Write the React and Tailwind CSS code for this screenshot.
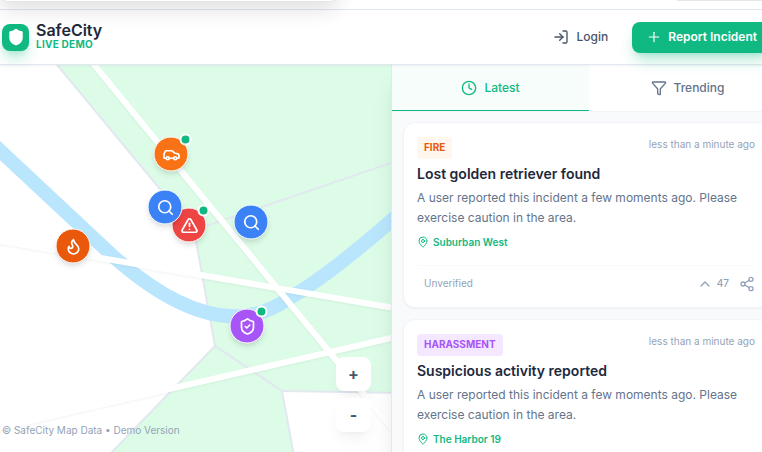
import {
  Car,
  ChevronUp,
  Clock,
  Flame,
  Funnel,
  LogIn,
  MapPin,
  Plus,
  Search,
  Share2,
  Shield,
  ShieldCheck,
  TriangleAlert,
} from 'lucide-react';

const pins = [
  { id: 1, label: 'Fire', icon: Flame, color: 'bg-[#ea580c]', place: 'left-[73px] top-[181px]', live: false },
  { id: 2, label: 'Car theft', icon: Car, color: 'bg-[#f97316]', place: 'left-[171px] top-[89px]', live: true },
  { id: 3, label: 'Accident', icon: TriangleAlert, color: 'bg-[#ef4444]', place: 'left-[189px] top-[160px]', live: true },
  { id: 4, label: 'Lost item', icon: Search, color: 'bg-[#3b82f6]', place: 'left-[165px] top-[142px]', live: false },
  { id: 5, label: 'Lost pet', icon: Search, color: 'bg-[#3b82f6]', place: 'left-[251px] top-[157px]', live: false },
  { id: 6, label: 'Harassment', icon: ShieldCheck, color: 'bg-[#a855f7]', place: 'left-[247px] top-[261px]', live: true },
];

const incidents = [
  {
    id: 1,
    type: 'FIRE',
    badge: 'bg-[#fff7ed] text-[#ea580c]',
    title: 'Lost golden retriever found',
    place: 'Suburban West',
    votes: 47,
  },
  {
    id: 2,
    type: 'HARASSMENT',
    badge: 'bg-[#f3e8ff] text-[#a855f7]',
    title: 'Suspicious activity reported',
    place: 'The Harbor 19',
  },
];

function Header() {
  return (
    <header className="relative z-20 flex h-14 shrink-0 items-center justify-between border-y border-slate-200 bg-white pr-[15px] pl-0.5 shadow-xs">
      <div className="flex items-center gap-[7px]">
        <div className="flex size-[27px] items-center justify-center rounded-lg bg-[#10b981] text-white shadow-lg shadow-[#10b981]/30">
          <Shield size={18} fill="currentColor" />
        </div>
        <div className="pb-[3px]">
          <h1 className="text-base leading-4 font-semibold text-[#1e293b]">SafeCity</h1>
          <p className="text-[10px] leading-3 font-bold tracking-wide text-[#10b981]">LIVE DEMO</p>
        </div>
      </div>
      <div className="flex items-center gap-6">
        <button className="flex items-center gap-2 text-xs font-medium text-[#475569]">
          <LogIn size={16} />
          Login
        </button>
        <button className="flex h-[31px] items-center gap-1.5 rounded-lg bg-[#10b981] px-3.5 text-xs font-semibold text-white shadow-lg shadow-[#10b981]/30">
          <Plus size={16} strokeWidth={1.75} />
          Report Incident
        </button>
      </div>
    </header>
  );
}

function MapBackground() {
  return (
    <svg
      className="absolute inset-0 size-full"
      viewBox="0 0 391 387"
      preserveAspectRatio="xMinYMin slice"
      fill="none"
      aria-hidden="true"
    >
      <rect width="391" height="387" fill="#fff" />
      <g fill="#dcfce7" stroke="#e2e8f0" strokeWidth="2">
        <path d="M53 -5L194 165L215 281L282 326L400 328V-5Z" />
        <path d="M194 165L400 95" />
        <path d="M215 281L108 391H294L282 326Z" />
      </g>
      <path d="M-6 80L115 193Q218 283 288 234Q330 210 400 148" stroke="#bae6fd" strokeWidth="14" />
      <g className="drop-shadow-xs" stroke="#fff" strokeWidth="6">
        <path d="M87 -9L400 373" />
        <path d="M-5 175L400 244" />
        <path d="M-5 364L400 271" />
      </g>
    </svg>
  );
}

function Pin({ label, icon: Icon, color, place, live }) {
  return (
    <button
      aria-label={label}
      className={`absolute flex size-[35px] -translate-x-1/2 -translate-y-1/2 items-center justify-center rounded-full border border-white text-white shadow-md ${color} ${place}`}
    >
      <Icon size={18} strokeWidth={2.3} />
      {live && (
        <span className="absolute -top-1 -right-1 size-3 rounded-full border-2 border-white bg-[#10b981]" />
      )}
    </button>
  );
}

function IncidentMap() {
  return (
    <section className="relative min-w-0 flex-1 overflow-hidden">
      <MapBackground />
      {pins.map((pin) => (
        <Pin key={pin.id} {...pin} />
      ))}
      <div className="absolute right-5 bottom-5 flex flex-col gap-[7px]">
        <button className="h-[34px] w-[35px] rounded-lg bg-white text-base font-bold text-[#475569] shadow-lg shadow-black/5">+</button>
        <button className="h-[34px] w-[35px] rounded-lg bg-white text-base font-bold text-[#475569] shadow-lg shadow-black/5">-</button>
      </div>
      <p className="absolute bottom-3.5 left-0.5 text-[10px] leading-4 text-[#94a3b8]">
        © SafeCity Map Data • Demo Version
      </p>
    </section>
  );
}

function IncidentCard({ type, badge, title, place, votes }) {
  return (
    <article className="rounded-xl border border-slate-100 bg-white px-[13px] pt-3.5 pb-1.5 shadow-xs last:pb-10">
      <div className="flex items-start justify-between">
        <span className={`rounded px-[7px] pb-0.5 text-[10px] leading-5 font-bold ${badge}`}>{type}</span>
        <time className="text-[10px] leading-3.5 text-[#94a3b8]">less than a minute ago</time>
      </div>
      <h3 className="mt-[5px] text-sm leading-5 font-semibold text-[#1e293b]">{title}</h3>
      <p className="mt-1 text-xs leading-5 text-[#64748b]">
        A user reported this incident a few moments ago. Please exercise caution in the area.
      </p>
      <div className="mt-1.5 flex items-center gap-1 text-[10px] leading-4 font-semibold text-[#10b981]">
        <MapPin size={12} />
        {place}
      </div>
      {votes && (
        <div className="mt-[15px] flex h-9 items-center justify-between border-t border-slate-50 pl-[7px] text-[10px] text-[#94a3b8]">
          <span>Unverified</span>
          <div className="flex items-center gap-2.5">
            <button className="flex items-center gap-1 font-medium">
              <ChevronUp size={16} />
              {votes}
            </button>
            <button aria-label="Share">
              <Share2 size={16} />
            </button>
          </div>
        </div>
      )}
    </article>
  );
}

function Feed() {
  return (
    <aside className="z-10 flex w-[395px] shrink-0 flex-col border-l border-slate-200 bg-[#f8fafc] shadow-xl">
      <nav className="flex h-[47px] shrink-0 border-b border-slate-100 bg-white text-xs font-medium">
        <button className="flex flex-1 items-center justify-center gap-[7px] border-b border-[#10b981] bg-[#f7fdfa] text-[#10b981]">
          <Clock size={16} />
          Latest
        </button>
        <button className="flex flex-1 items-center justify-center gap-[7px] text-[#64748b]">
          <Funnel size={16} />
          Trending
        </button>
      </nav>
      <div className="flex flex-1 flex-col gap-[11px] pt-2.5 pr-[17px] pl-[11px]">
        {incidents.map((item) => (
          <IncidentCard key={item.id} {...item} />
        ))}
      </div>
    </aside>
  );
}

export default function App() {
  return (
    <div className="h-screen overflow-hidden bg-white font-['Inter',sans-serif]">
      <div className="-mr-6 flex h-full flex-col">
        <div className="relative z-30 flex h-[9px] shrink-0 justify-end">
          <div className="absolute bottom-[7px] left-0 h-10 w-[338px] rounded-lg border border-gray-200 bg-white shadow-[0_8px_20px_rgba(0,0,0,0.12)]" />
          <div className="h-px w-[109px] bg-gray-200" />
        </div>
        <Header />
        <main className="flex min-h-0 flex-1">
          <IncidentMap />
          <Feed />
        </main>
      </div>
    </div>
  );
}
